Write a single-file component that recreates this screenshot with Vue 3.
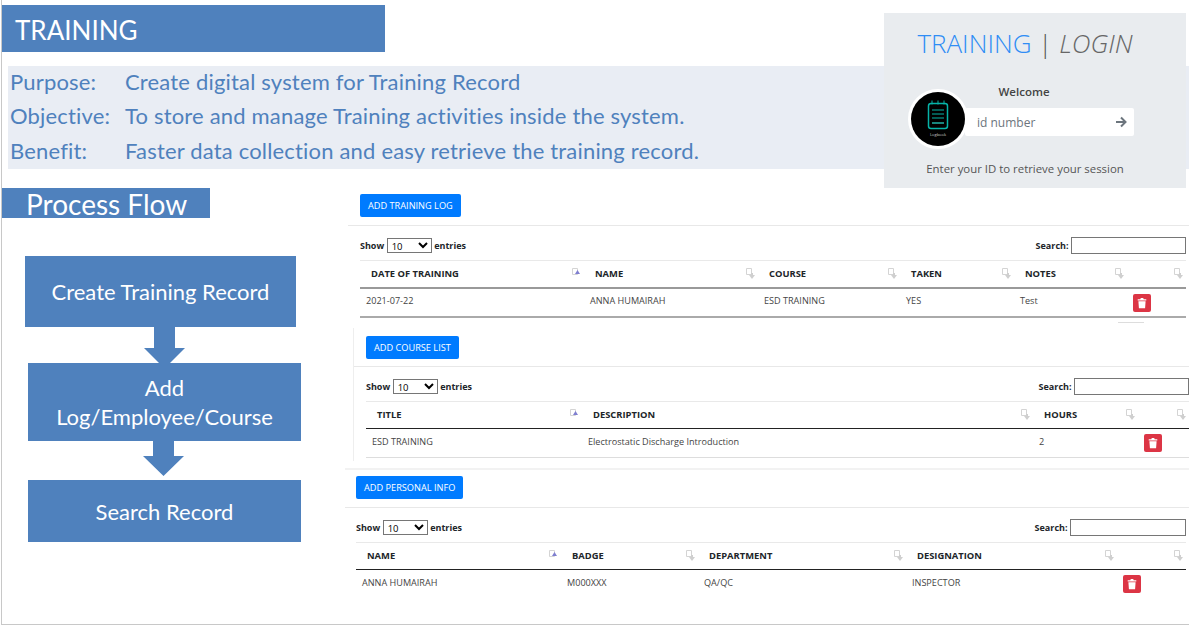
<script setup>
const purposes = [
  { label: 'Purpose:', text: 'Create digital system for Training Record' },
  { label: 'Objective:', text: 'To store and manage Training activities inside the system.' },
  { label: 'Benefit:', text: 'Faster data collection and easy retrieve the training record.' },
]

const panels = [
  {
    key: 'log',
    button: 'ADD TRAINING LOG',
    widths: [224, 174, 142, 114, 113, 59],
    columns: ['DATE OF TRAINING', 'NAME', 'COURSE', 'TAKEN', 'NOTES', ''],
    row: ['2021-07-22', 'ANNA HUMAIRAH', 'ESD TRAINING', 'YES', 'Test'],
  },
  {
    key: 'course',
    button: 'ADD COURSE LIST',
    widths: [216, 451, 105, 51],
    columns: ['TITLE', 'DESCRIPTION', 'HOURS', ''],
    row: ['ESD TRAINING', 'Electrostatic Discharge Introduction', '2'],
  },
  {
    key: 'info',
    button: 'ADD PERSONAL INFO',
    widths: [205, 137, 208, 211, 69],
    columns: ['NAME', 'BADGE', 'DEPARTMENT', 'DESIGNATION', ''],
    row: ['ANNA HUMAIRAH', 'M000XXX', 'QA/QC', 'INSPECTOR'],
  },
]
</script>

<template>
  <div class="slide">
    <div class="title-bar">TRAINING</div>

    <div class="band">
      <div v-for="item in purposes" :key="item.label" class="band-row">
        <span class="band-label">{{ item.label }}</span>
        <span>{{ item.text }}</span>
      </div>
    </div>

    <div class="lower">
      <div class="flow">
        <div class="flow-title">Process Flow</div>
        <div class="step step-one">Create Training Record</div>
        <svg class="arrow arrow-one" width="41" height="36" viewBox="0 0 41 36">
          <path d="M10 0h21v21h10L23 39h-5L0 21h10z" fill="#4f81bd" />
        </svg>
        <div class="step step-two">Add<br />Log/Employee/Course</div>
        <svg class="arrow arrow-two" width="41" height="35" viewBox="0 0 41 35">
          <path d="M10 0h21v15h10L20.500 35 0 15h10z" fill="#4f81bd" />
        </svg>
        <div class="step step-three">Search Record</div>
      </div>

      <div class="tables">
        <section v-for="panel in panels" :key="panel.key" class="panel" :class="panel.key">
          <div class="panel-head">
            <button class="add-btn">{{ panel.button }}</button>
          </div>
          <div class="panel-body">
            <div class="toolbar">
              <label class="show">
                Show
                <select class="entries"><option>10</option></select>
                entries
              </label>
              <label class="search">
                Search:
                <input class="search-input" type="text" />
              </label>
            </div>
            <table>
              <colgroup>
                <col v-for="(w, i) in panel.widths" :key="i" :style="{ width: w + 'px' }" />
              </colgroup>
              <thead>
                <tr>
                  <th v-for="(col, i) in panel.columns" :key="i">
                    {{ col }}
                    <svg class="sort" width="9" height="11" viewBox="0 0 9 11">
                      <path d="M0.500 0.500h5v6h-5z" fill="#fff" stroke="#d4d4d4" />
                      <path v-if="i === 0" d="M3 6l2.500-4L8 6z" fill="#7f7fd0" />
                      <path v-else d="M5 5v2H3l3 4 3-4H7V5z" fill="#cfcfcf" />
                    </svg>
                  </th>
                </tr>
              </thead>
              <tbody>
                <tr>
                  <td v-for="(cell, i) in panel.row" :key="i">{{ cell }}</td>
                  <td class="action-cell">
                    <button class="delete-btn" aria-label="Delete">
                      <svg width="12" height="12" viewBox="0 0 14 14">
                        <path d="M2 2.500h3l.6-1.200h2.800l.6 1.200h3V4H2zM2.800 5h8.400l-.6 8H3.400z" fill="#fff" />
                      </svg>
                    </button>
                  </td>
                </tr>
              </tbody>
            </table>
            <div v-if="panel.key === 'log'" class="pager-edge"></div>
          </div>
        </section>
      </div>
    </div>

    <div class="login">
      <h2 class="login-title"><span class="blue">TRAINING</span> <span class="bar">|</span> <em>LOGIN</em></h2>
      <div class="welcome">Welcome</div>
      <div class="login-row">
        <div class="avatar">
          <svg width="54" height="54" viewBox="0 0 54 54">
            <circle cx="27" cy="27" r="27" fill="#000" />
            <rect x="17.500" y="11.500" width="19" height="25" rx="2.500" fill="none" stroke="#06b3a8" stroke-width="1.500" />
            <path d="M21 8.500v4M27 8.500v4M33 8.500v4" stroke="#06b3a8" stroke-width="1" />
            <path d="M21 18h12M21 22h12M21 26h12" stroke="#06b3a8" stroke-width="1.200" />
            <path d="M21 31h12" stroke="#2be0d2" stroke-width="1.200" />
            <text x="27" y="44" text-anchor="middle" font-size="4" fill="#ccc" font-family="Open Sans, sans-serif">Logbook</text>
          </svg>
        </div>
        <div class="id-box">
          <span class="id-text">id number</span>
          <svg width="12" height="12" viewBox="0 0 12 12">
            <path d="M1 6h9.500M6 1.500L10.500 6 6 10.500" fill="none" stroke="#6c757d" stroke-width="2" />
          </svg>
        </div>
      </div>
      <div class="hint">Enter your ID to retrieve your session</div>
    </div>
  </div>
</template>

<style scoped>
.slide {
  position: relative;
  box-sizing: border-box;
  width: 1188px;
  height: 625px;
  margin-left: 1px;
  padding-top: 5px;
  border-left: 1px solid #c8c8c8;
  border-bottom: 1px solid #c8c8c8;
  overflow: hidden;
  background: #fff;
  font-family: Lato, "Open Sans", sans-serif;
}

.title-bar {
  box-sizing: border-box;
  width: 383px;
  height: 47px;
  padding-left: 13px;
  background: #4f81bd;
  color: #fff;
  font-size: 26px;
  line-height: 50px;
}

.band {
  box-sizing: border-box;
  height: 103px;
  margin: 14px 0 0 6px;
  padding: 0 0 0 2px;
  background: #e9edf4;
  color: #4f81bd;
  font-size: 22px;
  letter-spacing: 0.18px;
}

.band-row {
  display: flex;
  height: 34.300px;
  line-height: 32px;
}

.band-label {
  width: 115px;
}

.lower {
  display: flex;
  margin-top: 19px;
}

.flow {
  display: flex;
  flex-direction: column;
  align-items: flex-start;
  width: 343px;
  flex-shrink: 0;
}

.flow-title {
  box-sizing: border-box;
  width: 208px;
  height: 30px;
  padding-left: 24px;
  background: #4f81bd;
  color: #fff;
  font-size: 28px;
  line-height: 32px;
}

.step {
  display: flex;
  align-items: center;
  justify-content: center;
  box-sizing: border-box;
  background: #4f81bd;
  color: #fff;
  font-size: 22px;
  line-height: 29px;
  text-align: center;
}

.step-one {
  width: 271px;
  height: 71px;
  margin: 38px 0 0 23px;
}

.step-two {
  width: 273px;
  height: 78px;
  margin-left: 26px;
}

.step-three {
  width: 273px;
  height: 62px;
  margin: 4px 0 0 26px;
}

.arrow {
  display: block;
  overflow: visible;
}

.arrow-one {
  margin-left: 142px;
  position: relative;
  z-index: 1;
}

.arrow-two {
  margin-left: 141px;
}

.tables {
  flex: 1;
  min-width: 0;
  font-family: "Open Sans", sans-serif;
  color: #212529;
}

.panel.log {
  margin-left: 3px;
}

.panel.course {
  margin: 10px 0 0 8px;
  border-left: 1px solid #eee;
}

.panel.info {
  margin-top: 7px;
  border-top: 2px solid #f2f2f2;
}

.panel-head {
  border-bottom: 1px solid #e8e8e8;
}

.log .panel-head {
  padding: 6px 0 8px 12px;
}

.course .panel-head {
  padding: 8px 0 7px 12px;
}

.info .panel-head {
  padding: 6px 0 8px 11px;
}

.add-btn {
  display: block;
  height: 23px;
  padding: 0 8px;
  border: 0;
  border-radius: 2px;
  background: #007bff;
  color: #fff;
  font-family: inherit;
  font-size: 9.200px;
}

.log .panel-body {
  position: relative;
  padding: 0 3px 0 12px;
}

.course .panel-body {
  padding: 0 0 3px 12px;
}

.info .panel-body {
  padding: 0 3px 0 11px;
}

.toolbar {
  display: flex;
  justify-content: space-between;
  align-items: center;
  box-sizing: border-box;
  height: 34px;
  padding-top: 4px;
  font-size: 9px;
  font-weight: 700;
}

.course .toolbar,
.info .toolbar {
  padding-top: 6px;
}

.show,
.search {
  display: flex;
  align-items: center;
  gap: 2.500px;
}

.entries {
  box-sizing: border-box;
  width: 45px;
  height: 15px;
  padding: 0;
  font-family: inherit;
  font-size: 9.500px;
  background: #fff;
}

.search-input {
  box-sizing: border-box;
  width: 115px;
  height: 17px;
  padding: 0;
  border: 1px solid #767676;
  background: #fff;
}

.info .search-input {
  width: 116px;
}

table {
  border-collapse: collapse;
  table-layout: fixed;
  width: 100%;
}

th {
  position: relative;
  box-sizing: border-box;
  height: 27px;
  padding: 0 0 0 11px;
  border-top: 1px solid #e9e9e9;
  border-bottom: 1px solid #222;
  text-align: left;
  font-size: 9.400px;
  font-weight: 700;
}

.log th {
  border-bottom: 2px solid #999;
}

td {
  box-sizing: border-box;
  height: 29px;
  padding: 6px 0 0 6px;
  vertical-align: top;
  font-size: 9.100px;
  line-height: 13px;
  color: #444;
  border-bottom: 1px solid #ddd;
}

.log td {
  padding-top: 5px;
  border-bottom: 2px solid #aaa;
}

.info td {
  border-bottom: 0;
  height: 28px;
}

td.action-cell {
  padding-top: 5px;
}

.sort {
  position: absolute;
  top: 7px;
  right: 3px;
}

.delete-btn {
  display: flex;
  align-items: center;
  justify-content: center;
  width: 18px;
  height: 18px;
  padding: 0;
  border: 0;
  border-radius: 2px;
  background: #dc3545;
}

.pager-edge {
  position: absolute;
  top: 96px;
  right: 45px;
  width: 26px;
  height: 1px;
  background: #ddd;
}

.login {
  position: absolute;
  left: 882px;
  top: 13px;
  box-sizing: border-box;
  width: 302px;
  height: 175px;
  background: #e9ecef;
  font-family: "Open Sans", sans-serif;
  text-align: center;
}

.login-title {
  margin: 12px 0 0 -20px;
  font-size: 26px;
  font-weight: 300;
  line-height: 36px;
  color: #666;
}

.blue {
  color: #2f8df5;
}

.bar {
  color: #555;
}

.welcome {
  margin: 23px 0 0 -22px;
  color: #444;
  font-size: 11.500px;
  font-weight: 600;
  line-height: 16px;
}

.login-row {
  position: relative;
  height: 28px;
  margin: 8px 0 0 81px;
}

.id-box {
  display: flex;
  align-items: center;
  justify-content: space-between;
  box-sizing: border-box;
  width: 169px;
  height: 28px;
  padding: 0 7px 0 12px;
  border-radius: 2px;
  background: #fff;
  color: #6c757d;
  font-size: 12px;
}

.avatar {
  position: absolute;
  left: -57px;
  top: -19px;
  z-index: 1;
  width: 54px;
  height: 54px;
  border: 3px solid #fff;
  border-radius: 50%;
}

.avatar svg {
  display: block;
}

.hint {
  margin: 25px 0 0 -20px;
  color: #555;
  font-size: 11.400px;
  line-height: 16px;
}
</style>
